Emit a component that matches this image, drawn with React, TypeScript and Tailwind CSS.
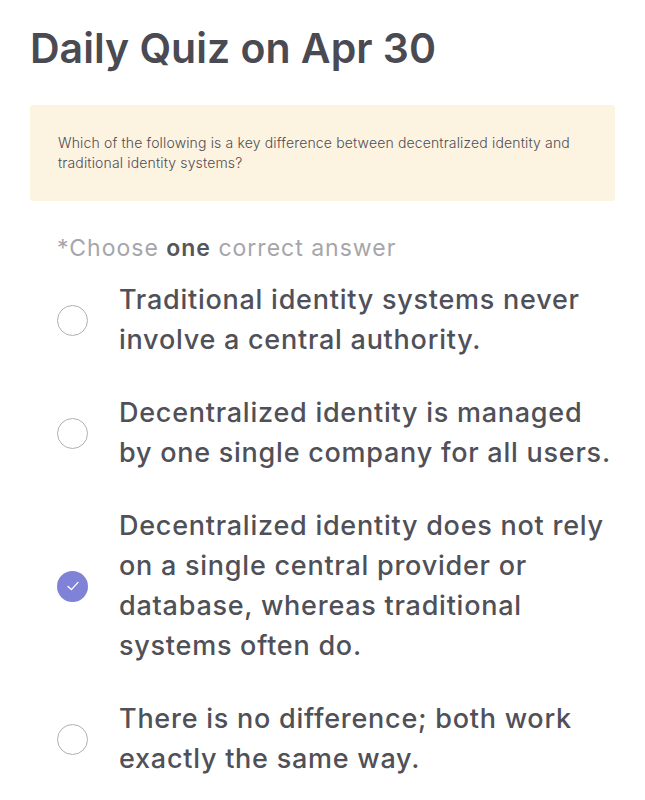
import React from "react";

const options = [
  "Traditional identity systems never involve a central authority.",
  "Decentralized identity is managed by one single company for all users.",
  "Decentralized identity does not rely on a single central provider or database, whereas traditional systems often do.",
  "There is no difference; both work exactly the same way.",
];

function Radio({ checked }: { checked: boolean }) {
  if (checked) {
    return (
      <div className="w-[31px] h-[31px] rounded-full bg-[#7f82d6] flex items-center justify-center shrink-0">
        <svg width="16" height="16" viewBox="0 0 16 16" fill="none">
          <path d="M3 8.4 L6.4 11.6 L13 4.4" stroke="white" strokeWidth="1.4" strokeLinecap="round" strokeLinejoin="round" />
        </svg>
      </div>
    );
  }
  return <div className="w-[31px] h-[31px] rounded-full border border-[#b0b0b4] bg-white shrink-0" />;
}

export default function App() {
  return (
    <div className="min-h-[800px] bg-white px-[30px] pt-[20px]" style={{ fontFamily: "Inter, 'Open Sans', sans-serif" }}>
      <h1 className="text-[41px] leading-[56px] font-semibold text-[#4a4a52]">Daily Quiz on Apr 30</h1>
      <div className="mt-[29px] bg-[#fdf3e1] rounded-[3px] w-[585px] px-[28px] pt-[28px] pb-[28px]">
        <p className="text-[14px] leading-[20px] font-light text-[#4d4d53] tracking-[0.15px]">
          Which of the following is a key difference between decentralized identity and traditional identity systems?
        </p>
      </div>
      <p className="mt-[32px] ml-[27px] text-[23px] leading-[30px] text-[#a6a6aa] tracking-[1px]">
        *Choose <span className="font-semibold text-[#55555c]">one</span> correct answer
      </p>
      <div className="mt-[17px] flex flex-col gap-[33px]">
        {options.map((o, i) => (
          <div key={i} className="flex items-center">
            <div className="ml-[27px] mr-[31px]">
              <Radio checked={i === 2} />
            </div>
            <p className="text-[27px] leading-[40px] text-[#505058] font-medium tracking-[0.75px] w-[495px]">{o}</p>
          </div>
        ))}
      </div>
    </div>
  );
}
